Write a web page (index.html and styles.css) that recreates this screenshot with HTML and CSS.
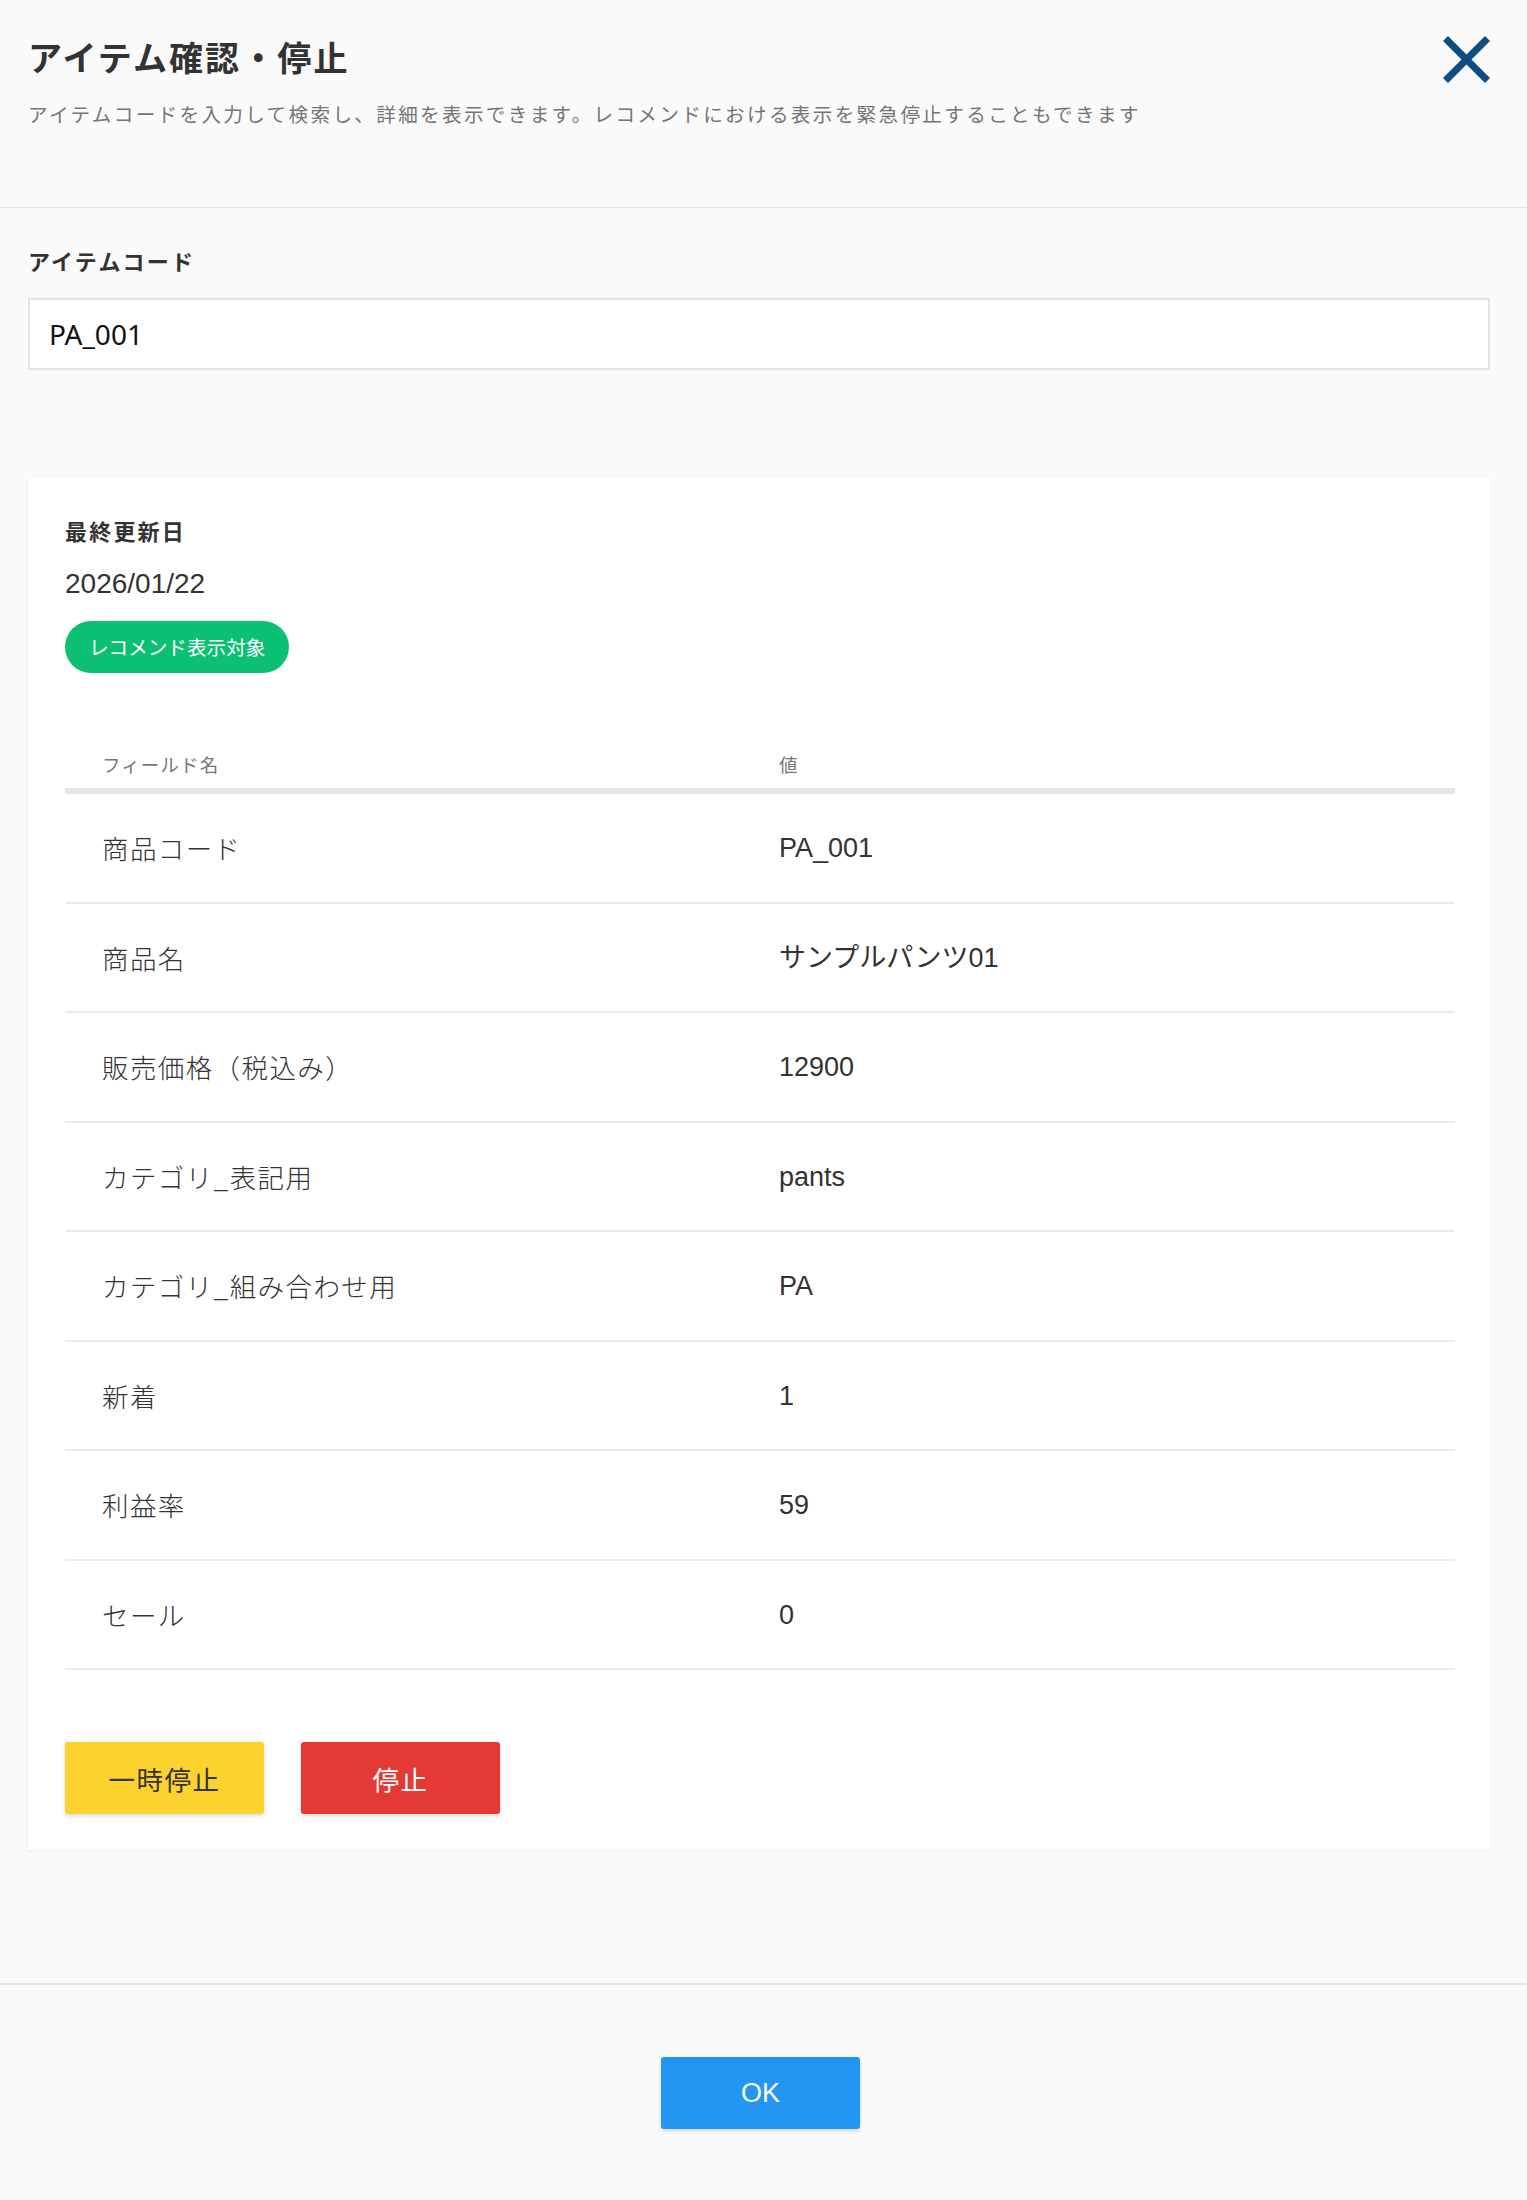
FILE: index.html
```html
<!DOCTYPE html>
<html lang="ja">
<head>
    <meta charset="UTF-8">
    <meta name="viewport" content="width=device-width, initial-scale=1.0">
    <title>アイテム確認・停止</title>
    <link rel="stylesheet" href="styles.css">
</head>
<body>

    <header class="dialog-header">
        <div class="header-text">
            <h1>アイテム確認・停止</h1>
            <p class="subtitle">アイテムコードを入力して検索し、詳細を表示できます。レコメンドにおける表示を緊急停止することもできます</p>
        </div>
        <button class="close-btn" aria-label="閉じる">
            <svg width="47" height="47" viewBox="0 0 47 47">
                <line x1="2.5" y1="2.5" x2="44.5" y2="44.5" stroke="#0f4c81" stroke-width="7"/>
                <line x1="44.5" y1="2.5" x2="2.5" y2="44.5" stroke="#0f4c81" stroke-width="7"/>
            </svg>
        </button>
    </header>

    <main class="dialog-body">
        <label class="field-label" for="itemCode">アイテムコード</label>
        <input class="code-input" id="itemCode" type="text" value="PA_001">

        <section class="item-card">
            <div class="field-label">最終更新日</div>
            <div class="updated">2026/01/22</div>
            <span class="badge">レコメンド表示対象</span>

            <table class="detail-table">
                <thead>
                    <tr>
                        <th class="col-name">フィールド名</th>
                        <th>値</th>
                    </tr>
                </thead>
                <tbody>
                    <tr><td>商品コード</td><td>PA_001</td></tr>
                    <tr><td>商品名</td><td>サンプルパンツ01</td></tr>
                    <tr><td>販売価格（税込み）</td><td>12900</td></tr>
                    <tr><td>カテゴリ_表記用</td><td>pants</td></tr>
                    <tr><td>カテゴリ_組み合わせ用</td><td>PA</td></tr>
                    <tr><td>新着</td><td>1</td></tr>
                    <tr><td>利益率</td><td>59</td></tr>
                    <tr><td>セール</td><td>0</td></tr>
                </tbody>
            </table>

            <div class="actions">
                <button class="btn pause-btn">一時停止</button>
                <button class="btn stop-btn">停止</button>
            </div>
        </section>
    </main>

    <footer class="dialog-footer">
        <button class="btn ok-btn">OK</button>
    </footer>

</body>
</html>
```

FILE: styles.css
```css
body {
    margin: 0;
    background: #fafafa;
    color: #333;
    font-family: "Noto Sans CJK JP", "Noto Sans", sans-serif;
}
.dialog-header {
    display: flex;
    justify-content: space-between;
    align-items: flex-start;
    padding: 34px 37px 79px 28px;
    border-bottom: 1px solid #e3e3e3;
}
.dialog-header h1 {
    margin: 0;
    font-size: 34px;
    line-height: 46px;
    letter-spacing: 2.1px;
    font-weight: bold;
    color: #333;
}
.subtitle {
    margin: 20px 0 0;
    font-size: 19.6px;
    line-height: 28px;
    letter-spacing: 2.33px;
    color: #757575;
}
.close-btn {
    margin-top: 2px;
    padding: 0;
    border: none;
    background: none;
    cursor: pointer;
    line-height: 0;
}
.dialog-body {
    padding: 37px 37px 133px 28px;
}
.field-label {
    display: block;
    font-size: 22px;
    line-height: 30px;
    letter-spacing: 2.2px;
    font-weight: bold;
    color: #333;
}
.code-input {
    display: block;
    box-sizing: border-box;
    width: 100%;
    height: 72px;
    margin-top: 23px;
    padding: 0 19px;
    border: 2px solid #e3e3e3;
    background: white;
    font-family: "Noto Sans", sans-serif;
    font-size: 28px;
    color: #111;
    outline: none;
}
.item-card {
    margin-top: 108px;
    padding: 37px 35px 36px 37px;
    background: white;
    box-shadow: 0 1px 3px rgba(0, 0, 0, 0.06);
}
.updated {
    margin-top: 21px;
    font-family: "Liberation Sans", "Noto Sans CJK JP", sans-serif;
    font-size: 28px;
    line-height: 36px;
    color: #333;
}
.badge {
    display: inline-block;
    margin-top: 19px;
    padding: 0 24px;
    height: 52px;
    line-height: 52px;
    border-radius: 26px;
    background: #0bbf73;
    color: white;
    font-size: 19.6px;
}
.detail-table {
    width: 100%;
    margin-top: 71px;
    border-collapse: separate;
    border-spacing: 0;
    font-family: "Liberation Sans", "Noto Sans CJK JP", sans-serif;
}
.detail-table th {
    padding: 8px 37px 11px;
    text-align: left;
    font-family: "Noto Sans CJK JP", sans-serif;
    font-weight: normal;
    font-size: 18.5px;
    line-height: 25px;
    letter-spacing: 1.1px;
    color: #777;
    border-bottom: 6px solid #e6e6e6;
}
.detail-table .col-name {
    width: 603px;
}
.detail-table td {
    padding: 36px 37px 35.5px;
    font-size: 27px;
    line-height: 36px;
    color: #333;
    border-bottom: 2px solid #ebebeb;
}
.detail-table td:first-child {
    font-family: "Noto Sans CJK JP", sans-serif;
    font-size: 26.5px;
    letter-spacing: 1.4px;
    font-weight: 300;
}
.actions {
    display: flex;
    gap: 37px;
    margin-top: 72px;
}
.btn {
    width: 199px;
    height: 72px;
    border: none;
    border-radius: 3px;
    font-family: "Noto Sans CJK JP", sans-serif;
    font-size: 26.5px;
    letter-spacing: 1.5px;
    cursor: pointer;
    box-shadow: 0 2px 4px rgba(0, 0, 0, 0.15);
}
.pause-btn {
    background: #fbd22e;
    color: #333;
}
.stop-btn {
    background: #e53935;
    color: white;
}
.dialog-footer {
    display: flex;
    justify-content: center;
    padding: 72px 6px 72px 0;
    border-top: 2px solid #e6e6e6;
}
.ok-btn {
    background: #2196f3;
    color: white;
    font-family: "Liberation Sans", sans-serif;
    font-size: 27px;
    letter-spacing: 0;
}
```
